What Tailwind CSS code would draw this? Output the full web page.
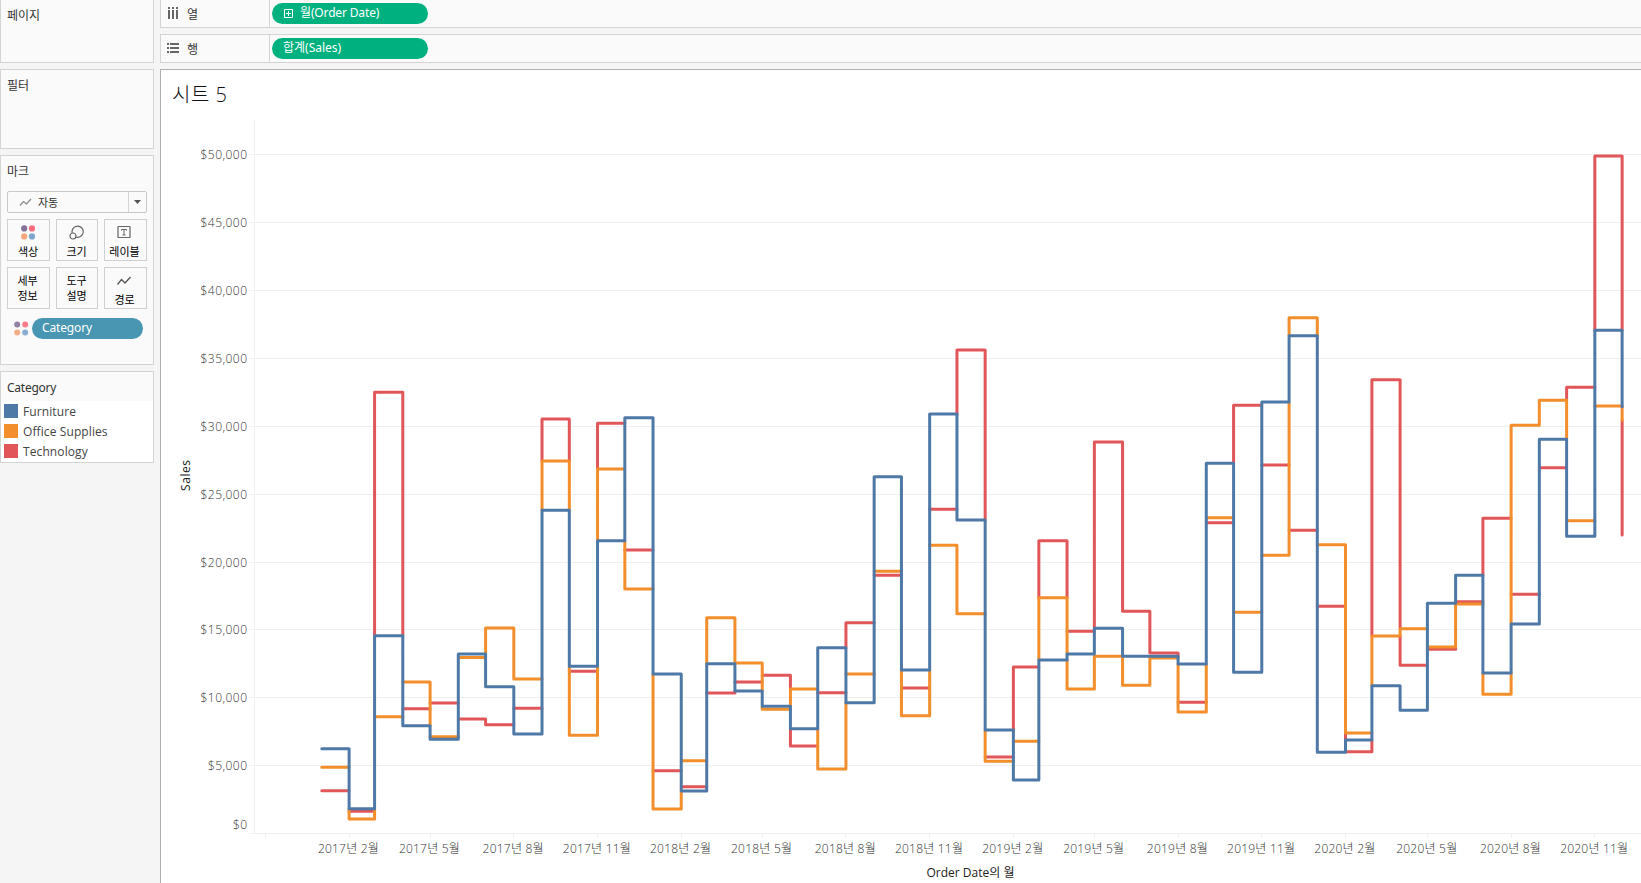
<!DOCTYPE html>
<html lang="ko">
<head>
<meta charset="utf-8">
<title>시트 5</title>
<script src="https://cdn.jsdelivr.net/npm/@tailwindcss/browser@4"></script>
</head>
<body class="flex h-[883px] w-[1641px] overflow-hidden bg-[#f5f5f5] font-['Noto_Sans','Noto_Sans_CJK_KR',sans-serif] text-[12px] leading-4 text-[#333]">
<aside class="flex w-[154px] shrink-0 flex-col gap-[6px]">
  <section class="h-[63px] border border-t-0 border-[#d4d4d4] bg-[#fafafa] px-[6px] pt-[8px]">페이지</section>
  <section class="h-[80px] border border-[#d4d4d4] bg-[#fafafa] px-[6px] pt-[8px]">필터</section>
  <section class="flex h-[210px] flex-col border border-[#d4d4d4] bg-[#fafafa] px-[6px] pt-[8px]">
    <h2>마크</h2>
    <div class="mt-[11px] flex h-[22px] w-[140px] items-center rounded-[2px] border border-[#c8c8c8] text-[11px]">
      <svg class="ml-[11px] h-[9px] w-[13px]" viewBox="0 0 13 9" fill="none" stroke="#888" stroke-width="1.2"><path d="M1 7.5 4.5 3.5 7.5 6 12 1"/></svg>
      <span class="ml-[6px] pt-px">자동</span>
      <span class="ml-auto flex h-full w-[18px] items-center justify-center border-l border-[#d4d4d4]"><svg class="h-[4px] w-[7px]" viewBox="0 0 7 4"><path d="M0 0H7L3.5 4Z" fill="#555"/></svg></span>
    </div>
    <div class="mt-[6px] grid w-[140px] grid-cols-[43px_42px_43px] gap-[6px] text-[11px] leading-[15px] text-black">
      <div class="flex h-[42px] flex-col items-center border border-[#d0d0d0] pr-px pt-[5px]">
        <svg class="h-[15px] w-[15px] shrink-0" viewBox="0 0 15 15"><circle cx="3.2" cy="3.4" r="3.1" fill="#85729a"/><circle cx="11" cy="3.4" r="3.1" fill="#f96d80"/><circle cx="3.2" cy="11.4" r="3.1" fill="#f4a67c"/><circle cx="11" cy="11.4" r="3.1" fill="#7fa5cd"/></svg>
        <span class="mt-[4px]">색상</span>
      </div>
      <div class="flex h-[42px] flex-col items-center border border-[#d0d0d0] pr-px pt-[5px]">
        <svg class="h-[15px] w-[15px] shrink-0" viewBox="0 0 15 15" fill="none" stroke="#666" stroke-width="1.2"><path d="M3.2 8A5.6 5.6 0 1 1 7.2 12.1"/><circle cx="4" cy="11" r="3"/></svg>
        <span class="mt-[4px]">크기</span>
      </div>
      <div class="flex h-[42px] flex-col items-center border border-[#d0d0d0] pr-[2px] pt-[5px]">
        <svg class="h-[15px] w-[15px] shrink-0" viewBox="0 0 15 15" fill="none" stroke="#666"><rect x="1" y="1.5" width="12" height="11" rx=".6" stroke-width="1.2"/><path d="M4.5 5.7V4.5H9.5V5.7M7 4.5V10M5.5 10H8.5"/></svg>
        <span class="mt-[4px] whitespace-nowrap">레이블</span>
      </div>
      <div class="flex h-[42px] flex-col items-center border border-[#d0d0d0] pr-[2px] pt-[5px]"><span>세부</span><span>정보</span></div>
      <div class="flex h-[42px] flex-col items-center border border-[#d0d0d0] pr-px pt-[5px]"><span>도구</span><span>설명</span></div>
      <div class="flex h-[42px] flex-col items-center border border-[#d0d0d0] pr-[2px] pt-[8px]">
        <svg class="h-[10px] w-[15px] shrink-0" viewBox="0 0 15 10" fill="none" stroke="#555" stroke-width="1.3"><path d="M.5 8.5 4.5 3.5 8 7 13.5 1"/></svg>
        <span class="mt-[6px]">경로</span>
      </div>
    </div>
    <div class="mt-[9px] flex items-center">
      <svg class="ml-[7px] h-[15px] w-[15px]" viewBox="0 0 15 15"><circle cx="3.2" cy="3.6" r="3" fill="#9280a5"/><circle cx="11.2" cy="3.6" r="3" fill="#fa7b8b"/><circle cx="3.2" cy="11.6" r="3" fill="#f4ae87"/><circle cx="11.2" cy="11.6" r="3" fill="#8badd1"/></svg>
      <span class="ml-[3px] flex h-[21px] w-[111px] items-center rounded-full bg-[#4996b2] pb-px pl-[10px] tracking-[-0.15px] text-white">Category</span>
    </div>
  </section>
  <section class="h-[92px] border border-[#d4d4d4] bg-white text-[12px]">
    <h2 class="h-[29px] bg-[#fafafa] px-[6px] pt-[8px] tracking-[-0.25px]">Category</h2>
    <ul class="flex flex-col gap-[6px] pl-[3px] pt-[3px] font-['Open_Sans',sans-serif] leading-[16px]">
      <li class="flex h-[14px] items-center gap-[5px] whitespace-nowrap"><i class="h-[14px] w-[14px] bg-[#4e79a7]"></i><span class="h-[14px] tracking-[0.1px] text-[#444]">Furniture</span></li>
      <li class="flex h-[14px] items-center gap-[5px] whitespace-nowrap"><i class="h-[14px] w-[14px] bg-[#f28e2b]"></i><span class="h-[14px] tracking-[0.1px] text-[#444]">Office Supplies</span></li>
      <li class="flex h-[14px] items-center gap-[5px] whitespace-nowrap"><i class="h-[14px] w-[14px] bg-[#e15759]"></i><span class="h-[14px] tracking-[0.1px] text-[#444]">Technology</span></li>
    </ul>
  </section>
</aside>
<main class="ml-[6px] flex min-w-0 flex-1 flex-col gap-[6px]">
  <div class="flex h-[28px] shrink-0 border-b border-l border-[#d4d4d4] bg-[#fafafa]">
    <div class="flex w-[109px] items-start border-r border-[#d4d4d4] pl-[7px]">
      <svg class="mt-[7px] h-[12px] w-[11px]" viewBox="0 0 11 12" fill="#666"><path d="M0 0h2v2H0zM4 0h2v2H4zM8 0h2v2H8zM0 3h2v9H0zM4 3h2v9H4zM8 3h2v9H8z"/></svg>
      <span class="ml-[8px] mt-[7px]">열</span>
    </div>
    <div class="ml-[2px] mt-[3px] flex h-[21px] w-[156px] items-center rounded-full bg-[#00b180] pb-px pl-[12px] text-white">
      <svg class="mt-px h-[9px] w-[9px]" viewBox="0 0 9 9" fill="none" stroke="#fff"><path d="M.5 .5H8.5V8.5H.5ZM2 4.5H7M4.5 2V7"/></svg>
      <span class="ml-[7px] tracking-[-0.15px]">월(Order Date)</span>
    </div>
  </div>
  <div class="flex h-[29px] shrink-0 border-y border-l border-[#d4d4d4] bg-[#fafafa]">
    <div class="flex w-[109px] items-start border-r border-[#d4d4d4] pl-[6px]">
      <svg class="mt-[8px] h-[10px] w-[12px]" viewBox="0 0 12 10" fill="#666"><path d="M0 0h2v2H0zM0 4h2v2H0zM0 8h2v2H0zM3 0h9v2H3zM3 4h9v2H3zM3 8h9v2H3z"/></svg>
      <span class="ml-[8px] mt-[7px]">행</span>
    </div>
    <div class="ml-[2px] mt-[3px] flex h-[21px] w-[156px] items-center rounded-full bg-[#00b180] pb-[2px] pl-[11px] text-white">합계(Sales)</div>
  </div>
  <div class="min-h-0 flex-1 border-l border-t border-[#b0b0b0] bg-white">
    <svg id="chart" class="block h-[813px] w-[1480px] font-['Open_Sans','Noto_Sans_CJK_KR',sans-serif]" viewBox="161 70 1480 813" font-size="12" fill="#333">
      <text x="172" y="102.4" font-size="20" font-weight="300" fill="#111" textLength="55">시트 5</text>
      <g id="grid" stroke="#f0f0f0" shape-rendering="crispEdges"></g>
      <g id="labels" font-weight="300"></g>
      <text transform="translate(190 475.5) rotate(-90)" text-anchor="middle" fill="#222" textLength="31">Sales</text>
      <text x="970.5" y="877" text-anchor="middle" fill="#222" textLength="88">Order Date의 월</text>
      <g id="lines" fill="none" stroke-width="3" stroke-linecap="round"></g>
    </svg>
  </div>
</main>
<script>
const NS = 'http://www.w3.org/2000/svg';
const add = (parent, tag, attrs, text) => {
  const el = document.createElementNS(NS, tag);
  for (const k in attrs) el.setAttribute(k, attrs[k]);
  if (text) el.textContent = text;
  document.getElementById(parent).appendChild(el);
};
const line = (x1, y1, x2, y2) => add('grid', 'line', { x1, y1, x2, y2 });
const start = Date.UTC(2017, 0, 1);
// Month index counted from January 2017, placed on a day-based scale
const px = m => 320.9 + (Date.UTC(2017, m, 1) - start) / 86400000 * 0.90995;

[154, 222, 290, 358, 426, 494, 562, 629, 697, 765, 833].forEach((y, i) => {
  line(249, y + .5, 1641, y + .5);
  const t = i === 10 ? '$0' : '$' + (50 - 5 * i) + ',000';
  add('labels', 'text', { x: 247, y: i === 10 ? 829 : y + 5, 'text-anchor': 'end', textLength: i === 10 ? 14 : i === 9 ? 39 : 46.5 }, t);
});
line(254.5, 120, 254.5, 834);
for (let m = -2; m < 48; m++) {
  const x = Math.floor(px(m)) + .5, major = (m + 2) % 3 === 0;
  line(x, 833, x, major ? 838 : 835);
  if (major && m > 0) {
    const label = (2017 + Math.floor(m / 12)) + '년 ' + (m % 12 + 1) + '월';
    add('labels', 'text', { x: px(m) - .7, y: 853, 'text-anchor': 'middle', textLength: m % 12 === 10 ? 68 : 61 }, label);
  }
}

const series = [
  ['#e15759', 535, [790.7,811.3,392.3,708.7,703,719,724.7,708.3,419,671.3,423.3,550, 770.7,786.7,693,682,675.3,746,692.7,622.7,575.3,688,509.3,350, 757,667,540.7,631.3,442,611.3,653,702.3,522.7,405.3,465,530.3, 606.3,751.7,379.7,665.3,649.3,601.7,518.3,594.3,467.7,387.3,156]],
  ['#f28e2b', 420.3, [767.3,819,716.7,682,736.7,657.5,628,679,461,735.3,469,589, 809,760.7,617.7,663,709.3,689,769,674,571.3,715.7,545.3,613.7, 761.3,741.3,597.7,689,656.3,685.3,658,712,517.7,612.3,555.3,317.7, 544.7,733,636,628.7,647,604,694.3,425.3,400.3,520.7,406]],
  ['#4e79a7', 406.7, [748.7,808.7,635.7,725.7,739.3,654,686.7,734,510.3,666.3,540.7,417.7, 674,791,663.7,691,706.3,728.7,647.7,702.7,476.7,670,414,520, 730,780,660,654,628.3,656.3,656.3,664,463.3,672.3,402,335.7, 752.3,740,685.7,710.3,603.3,575.3,673,624,439.3,536.3,330.3]]
];
// Vertical extent of a series at the boundary that follows month i
const span = (s, i) => {
  const a = s[2][i], b = i + 1 < s[2].length ? s[2][i + 1] : s[1];
  return [Math.min(a, b), Math.max(a, b)];
};
series.forEach((s, k) => {
  const n = s[2].length;
  let d = '';
  for (let i = 0; i < n; i++) {
    d += 'M' + (px(i) + (i ? 0 : .9)) + ' ' + s[2][i] + 'H' + px(i + 1);
    // Risers hidden under a later series are left out, so edges stay clean
    let parts = [span(s, i)];
    for (const upper of series.slice(k + 1)) {
      const [lo, hi] = span(upper, i);
      parts = parts.flatMap(([a, b]) => hi <= a || lo >= b ? [[a, b]] : [[a, lo], [hi, b]].filter(([p, q]) => q > p));
    }
    for (const [a, b] of parts) d += 'M' + px(i + 1) + ' ' + a + 'V' + b;
  }
  add('lines', 'path', { d, stroke: s[0] });
});
</script>
</body>
</html>
